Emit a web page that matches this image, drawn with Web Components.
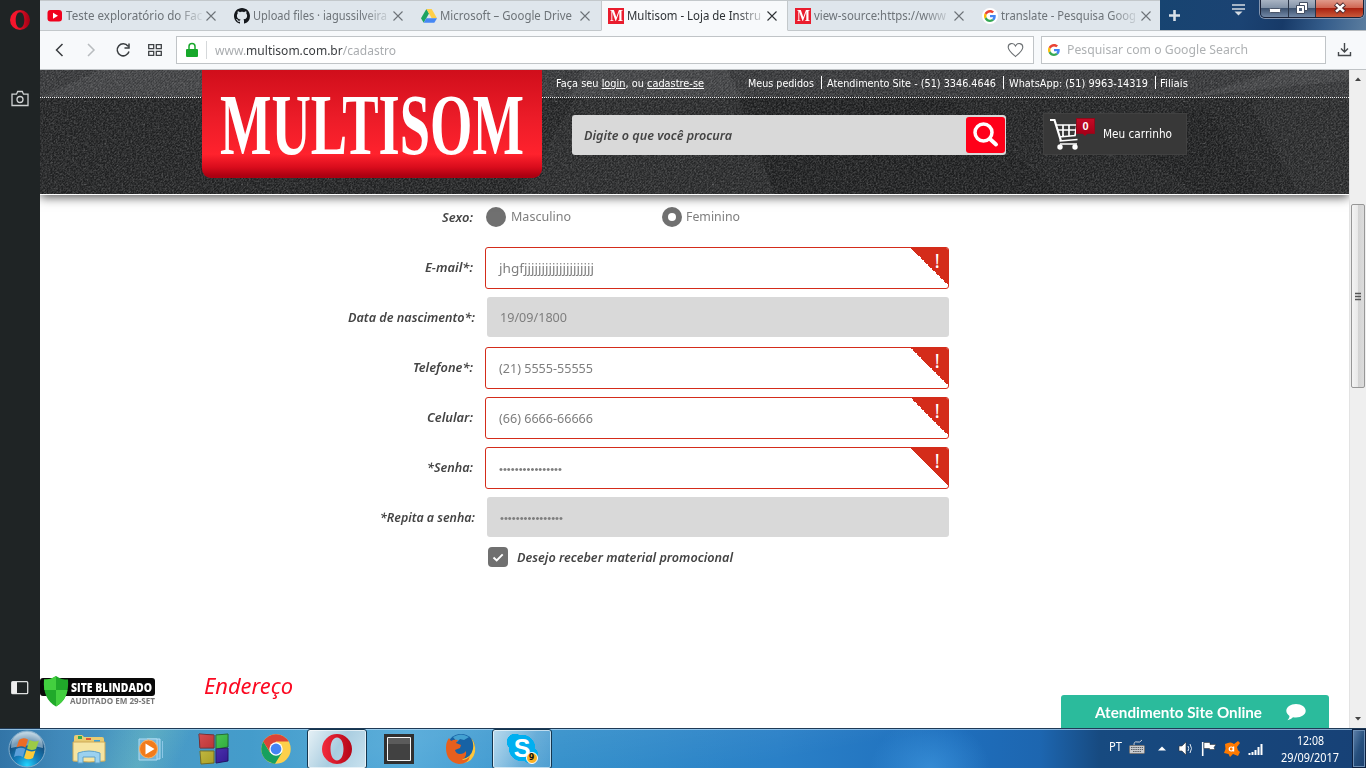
<!DOCTYPE html>
<html lang="pt-BR">
<head>
<meta charset="utf-8">
<title>Multisom - Loja de Instrumentos</title>
<style>
html,body{margin:0;height:100%;overflow:hidden;background:#fff}
body{font-family:"Noto Sans","Open Sans",sans-serif;font-size:13px}
</style>
</head>
<body>
<desk-screen></desk-screen>
<script>
const define = (name, css, html, after) => customElements.define(name, class extends HTMLElement {
  connectedCallback() {
    if (this.shadowRoot) return;
    const root = this.attachShadow({mode: 'open'});
    const body = typeof html === 'function' ? html(this) : html;
    root.innerHTML = `<style>*{box-sizing:border-box}:host{box-sizing:border-box}svg{display:block;flex:none}${css}</style>${body}`;
    if (after) after(this, root);
  }
});

/* One line of text, set to a given advance width. */
define('fit-text', `:host{display:inline-block;white-space:nowrap;flex:none}span{display:inline-block;transform-origin:0 50%}`,
  '<span><slot></slot></span>',
  (el, root) => {
    const s = root.querySelector('span'), w = +el.getAttribute('w');
    const n = s.getBoundingClientRect().width;
    el.style.width = w + 'px';
    if (n) s.style.transform = `scaleX(${w / n})`;
  });

/* ---------- icons ---------- */
const G = `<path fill="#ea4335" d="M24 9.5c3.5 0 6.700 1.200 9.200 3.600l6.900-6.900C35.900 2.400 30.500 0 24 0 14.600 0 6.500 5.400 2.600 13.200l8 6.200C12.400 13.700 17.700 9.500 24 9.500z"/><path fill="#4285f4" d="M47 24.600c0-1.600-.2-3.100-.4-4.600H24v9h12.900c-.6 3-2.300 5.500-4.800 7.200l7.700 6C44.400 38 47 31.800 47 24.600z"/><path fill="#fbbc05" d="M10.500 28.600c-.5-1.500-.8-3-.8-4.600s.3-3.100.8-4.600l-8-6.200C.9 16.500 0 20.100 0 24s.9 7.500 2.600 10.800z"/><path fill="#34a853" d="M24 48c6.500 0 11.900-2.100 15.900-5.800l-7.700-6c-2.200 1.500-4.900 2.300-8.200 2.300-6.300 0-11.600-4.200-13.500-9.900l-8 6.200C6.500 42.600 14.600 48 24 48z"/>`;
const ICONS = {
  youtube: `<svg width="16" height="16" viewBox="0 0 16 16"><rect x=".5" y="2" width="14.500" height="11.500" rx="3" fill="#f0001c"/><path d="M6 4.800v6l5-3z" fill="#fff"/></svg>`,
  github: `<svg width="16" height="16" viewBox="0 0 16 16"><path fill="#15181c" d="M8 0C3.580 0 0 3.580 0 8c0 3.540 2.290 6.530 5.470 7.590.4.070.55-.17.55-.38 0-.19-.01-.82-.01-1.490-2.010.37-2.530-.49-2.690-.94-.09-.23-.48-.94-.82-1.130-.28-.15-.68-.52-.01-.53.63-.01 1.080.58 1.230.82.72 1.210 1.870.87 2.330.66.070-.52.28-.87.51-1.070-1.780-.2-3.640-.89-3.640-3.950 0-.87.31-1.590.82-2.150-.08-.2-.36-1.020.08-2.120 0 0 .67-.21 2.200.82.640-.18 1.320-.27 2-.27s1.360.09 2 .27c1.530-1.040 2.200-.82 2.200-.82.44 1.100.16 1.920.08 2.120.51.56.82 1.270.82 2.150 0 3.070-1.870 3.750-3.650 3.950.29.25.54.73.54 1.480 0 1.070-.01 1.930-.01 2.200 0 .21.15.46.55.38A8 8 0 0016 8c0-4.420-3.580-8-8-8z"/></svg>`,
  drive: `<svg width="16" height="16" viewBox="0 0 16 16"><path fill="#1da362" d="M5.400 1L0 10.200 2.700 14.800 8 5.500z"/><path fill="#ffcf48" d="M5.400 1h5.300L16 10.200h-5.300z"/><path fill="#4587f4" d="M5.300 10.200H16l-2.700 4.600H2.700z"/></svg>`,
  google: `<svg width="16" height="16" viewBox="0 0 16 16"><circle cx="8" cy="8" r="8" fill="#fff"/><g transform="translate(2 2) scale(.25)">${G}</g></svg>`
};

define('tab-item', `
:host{display:flex;align-items:center;width:187px;height:31px;padding:0 5px 0 7px;color:#6d7378;background:#dfe6ec;border-top:1px solid #c3c8cb;border-bottom:1px solid #c3c8cb;position:relative}
:host([active]){background:#f7f9fb;border-bottom-color:#f7f9fb;border-left:1px solid #c3c8cb;border-right:1px solid #c3c8cb;color:#2d3135;padding-left:6px;padding-right:4px}
:host([line])::after{content:"";position:absolute;right:-1px;top:6px;width:1px;height:16px;background:#bfc4c8}
.t{width:136px;margin-left:3px;height:22px;line-height:22px;font-size:12.5px;overflow:hidden;-webkit-mask-image:linear-gradient(90deg,#000 110px,transparent 140px)}
:host([full]) .t{-webkit-mask-image:none}
.x{margin-left:2px}
.m{width:16px;height:16px;background:#e91c2d;color:#fff;font:bold 16px/16px "Liberation Serif",serif;display:flex;justify-content:center}
`, el => {
  const k = el.getAttribute('icon');
  const ic = ICONS[k] || `<div class="m"><fit-text w="13">M</fit-text></div>`;
  return `${ic}<div class="t"><fit-text w="${el.getAttribute('w')}"><slot></slot></fit-text></div>
  <svg class="x" width="14" height="14" viewBox="0 0 14 14"><path d="M2.500 2.500l9 9M11.500 2.500l-9 9" stroke="currentColor" stroke-width="1.100" fill="none"/></svg>`;
});

define('window-buttons', `:host{display:flex;width:104px;height:18px;border:1px solid #1a2238;border-top:0;border-radius:0 0 5px 5px;overflow:hidden;box-shadow:0 0 0 1px #8496b0}
div{display:flex;justify-content:center;align-items:center;border-right:1px solid #2a3548;background:linear-gradient(#a9b4c3 0,#8090a6 48%,#3e5370 50%,#7288a6)}
.a{width:28px}.b{width:27px}.c{flex:1;border:0;background:linear-gradient(#e09a8a 0,#cf6450 48%,#ab2210 50%,#c95a3a)}svg{margin-top:-2px}`,
`<div class="a"><svg width="14" height="14"><rect x="1.500" y="7.500" width="11" height="4" rx="1" fill="#fff" stroke="#4b566a"/></svg></div>
<div class="b"><svg width="14" height="14"><path d="M4.500 1.500h8v8h-8z" fill="#fff" stroke="#444f63"/><path d="M1.500 4.500h8v8h-8z" fill="#fff" stroke="#444f63"/><path d="M4 7h3v3H4z" fill="#52627a"/></svg></div>
<div class="c"><svg width="14" height="14"><path d="M2.500 3l9 8M11.500 3l-9 8" stroke="#4e2a2e" stroke-width="4.500"/><path d="M3 3.400l8 7.200M11 3.400l-8 7.200" stroke="#fff" stroke-width="2.600"/></svg></div>`);

define('tab-strip', `:host{display:flex;height:31px;background:#dfe6ec}
.aero{flex:1;display:flex;align-items:flex-start;background:linear-gradient(100deg,#174471 0,#1b4373 40%,#173a68 60%,#355d8b 80%,#5b7d9f);border-bottom:1px solid #b7bcc0;padding-right:2px}
.plus{margin:9px 0 0 8px}.menu{margin:3px 14px 0 auto}`,
`<tab-item icon="youtube" w="143" line>Teste exploratório do Face</tab-item><tab-item icon="github" w="134" line>Upload files · iagussilveira</tab-item><tab-item icon="drive" w="132" full>Microsoft – Google Drive</tab-item><tab-item icon="m" active w="134">Multisom - Loja de Instru</tab-item><tab-item icon="m" w="132" line>view-source:https://www</tab-item><tab-item icon="google" w="135" style="width:185px">translate - Pesquisa Goog</tab-item>
<div class="aero"><svg class="plus" width="13" height="13"><path d="M6.500 1v11M1 6.500h11" stroke="#d8e0e8" stroke-width="2.600"/></svg>
<svg class="menu" width="15" height="14"><path d="M1 2h13M1 6h13" stroke="#d5dbe2" stroke-width="1.600"/><path d="M3.500 8.500h8l-4 4z" fill="#d5dbe2"/></svg><window-buttons></window-buttons></div>`);

define('tool-bar', `:host{display:flex;height:39px;background:#f7f9fb;border-bottom:1px solid #bfc3c6;align-items:center;padding:0 13px 0 11px;line-height:20px}
.nav{display:flex;gap:16px;width:125px}
.box{height:28px;background:#fff;border:1px solid #c0c4c7;display:flex;align-items:center}
.addr{width:858px;padding:0 9px 0 9px;color:#a9acaf;font-size:13px}.addr i{width:1px;height:18px;background:#d5d8da;margin:0 8px 0 8px}
.addr b{font-weight:400;color:#3a3d40}.heart{margin-left:auto}
.srch{width:285px;margin-left:7px;padding-left:4px;color:#aeb1b3;font-size:12.500px}.srch fit-text{margin-left:5px}
.dl{margin-left:auto}`,
`<div class="nav"><svg width="16" height="16" fill="none" stroke="#383c3f" stroke-width="1.500"><path d="M11.500 2L5.500 8l6 6"/></svg><svg width="16" height="16" fill="none" stroke="#b8bcbf" stroke-width="1.500"><path d="M5 2l6 6-6 6"/></svg><svg width="16" height="16" fill="none" stroke="#383c3f" stroke-width="1.500"><path d="M13 4.200A6 6 0 1 0 14 9.500M14 1.500v4.500H9.500"/></svg><svg width="16" height="16" fill="none" stroke="#3f4346" stroke-width="1.300"><path d="M1.700 2.700h5v4h-5zM9.300 2.700h5v4h-5zM1.700 9.300h5v4h-5zM9.300 9.300h5v4h-5z"/></svg></div>
<div class="box addr"><svg width="12" height="16"><path d="M3 8V4.500a3 3 0 0 1 6 0V8" fill="none" stroke="#17a82b" stroke-width="1.500"/><rect x="0" y="7" width="12" height="8" rx="1" fill="#17a82b"/></svg><i></i><fit-text w="181">www.<b>multisom.com.br</b>/cadastro</fit-text>
<svg class="heart" width="17" height="16"><path d="M8.500 14.500C5 11.500 1.200 8.500 1.200 5.200 1.200 1.200 6.500 0 8.500 4c2-4 7.300-2.800 7.300 1.200 0 3.300-3.800 6.300-7.300 9.300z" fill="none" stroke="#6d7174" stroke-width="1.100"/></svg></div>
<div class="box srch">${ICONS.google}<fit-text w="181">Pesquisar com o Google Search</fit-text></div>
<svg class="dl" width="16" height="16" fill="none" stroke="#44484b" stroke-width="1.400"><path d="M7.500 1v9M4 6.500L7.500 10 11 6.500M1.500 10v3.500h12V10"/></svg>`);

define('side-bar', `:host{display:flex;flex-direction:column;align-items:center;width:40px;background:#1f2425;padding:10px 0 33px}
.cam{margin:60px 1px 0 0}.pan{margin:auto 1px 0 0}`,
`<svg width="20" height="20"><defs><linearGradient id="a"><stop offset=".3" stop-color="#f5152c"/><stop offset="1" stop-color="#a00014"/></linearGradient></defs><path fill="url(#a)" fill-rule="evenodd" d="M10 0a10 10 0 1 0 0 20 10 10 0 0 0 0-20zM10 2.200c2.700 0 4.300 3.400 4.300 7.800s-1.600 7.800-4.300 7.800S5.700 14.400 5.700 10 7.300 2.200 10 2.200z"/></svg>
<svg class="cam" width="18" height="17" fill="none" stroke="#d0d3d4" stroke-width="1.300"><path d="M1 4.200h4.500l1.200-2.700h4.600l1.200 2.700H17v11.300H1z"/><circle cx="9" cy="9.500" r="3"/></svg>
<svg class="pan" width="18" height="14"><rect x=".7" y=".7" width="16" height="12" rx="1" fill="none" stroke="#dfe1e1" stroke-width="1.300"/><path d="M1 1h5v11.500H1z" fill="#eee"/></svg>`);

define('site-logo', `:host{display:block;width:340px;height:108px;border-radius:0 0 9px 9px;background:linear-gradient(#d00e1b 0,#ec1c28 45%,#ff222d 78%,#d90c1c 90%,#ac0011 98%);color:#fff;padding:12px 0 0 18px;font:bold 86px/86px "Liberation Serif",serif}`,
`<fit-text w="304">MULTISOM</fit-text>`);

define('top-links', `:host{display:flex;height:27px;align-items:center;color:#fff;font:11px/14px "DejaVu Sans",sans-serif;padding:0 0 0 14px}
u{text-underline-offset:1px}.r{display:flex;margin-left:44px;align-items:center}i{width:1px;height:13px;background:#fff;margin:-2px 5px 0 7px}`,
`<fit-text w="148">Faça seu <u>login</u>, ou <u>cadastre-se</u></fit-text><div class="r"><fit-text w="66">Meus pedidos</fit-text><i></i><fit-text w="169">Atendimento Site - (51) 3346.4646</fit-text><i></i><fit-text w="139">WhatsApp: (51) 9963-14319</fit-text><i style="margin-right:4px"></i><fit-text w="28">Filiais</fit-text></div>`);

define('search-field', `:host{display:flex;width:434px;height:40px;background:#d9d9d9;border-radius:3px;align-items:center;padding:0 1px 0 12px;color:#444;justify-content:space-between;font:italic 600 13px/20px "Noto Sans",sans-serif}
fit-text{padding-bottom:1px}.b{width:39px;height:36px;background:#ff0019;border-radius:3px;display:flex;align-items:center;justify-content:center}`,
`<fit-text w="148">Digite o que você procura</fit-text><div class="b"><svg width="26" height="26" fill="none" stroke="#fff"><circle cx="10.500" cy="10.500" r="8.500" stroke-width="3.500"/><path d="M17 17l6 5.500" stroke-width="4" stroke-linecap="round"/></svg></div>`);

define('cart-button', `:host{display:flex;width:144px;height:42px;background:#383838;border:1px solid #414141;color:#fff;font:12px/16px "DejaVu Sans",sans-serif;align-items:center;position:relative;padding-left:5px}
fit-text.l{margin-left:23px}.n{position:absolute;left:32px;top:4px;width:19px;height:16px;background:linear-gradient(#c40a26,#a60018);font:bold 11px/14px "Liberation Sans",sans-serif;text-align:center;border:1px solid #8e0b1b}
.n::after{content:"";position:absolute;left:5px;top:14px;border:3px solid transparent;border-top-color:#a60018}`,
`<svg width="31" height="32" fill="none" stroke="#fff"><path d="M1 2h4.500l6.500 21" stroke-width="2.200"/><path d="M7 7h21l-2 10.500-16 1.500M8 12h19M14 7v11M20 7v11" stroke-width="1.700"/><path d="M10.500 23l18-1.500M11 26h17" stroke-width="1.700"/><circle cx="11" cy="29" r="2.700" fill="#fff" stroke="none"/><circle cx="26" cy="29" r="2.700" fill="#fff" stroke="none"/></svg><fit-text class="l" w="69">Meu carrinho</fit-text><div class="n">0</div>`);

define('site-header', `:host{display:block;height:125px;position:relative;background:#262627;border-bottom:1px solid #fff;box-shadow:0 2px 10px rgba(0,0,0,.7);flex:none}
.bg{position:absolute;inset:0}
.in{position:relative;display:flex;width:985px;margin-left:162px}
.r{width:645px}.row{display:flex;padding:16px 0 0 30px;justify-content:space-between;align-items:flex-start}search-field{margin-top:2px}`,
`<svg class="bg" width="1309" height="124"><defs><pattern id="h" width="3" height="3" patternUnits="userSpaceOnUse"><path d="M0 2h1v1H0zM1 1h1v1H1zM2 0h1v1H2z" fill="#000" fill-opacity=".16"/></pattern><pattern id="s" width="157" height="83" patternUnits="userSpaceOnUse" fill="#fff" fill-opacity=".16"><path d="M12 9h1v1h-1zM44 31h2v1h-2zM77 12h1v1h-1zM103 54h2v1h-2zM131 25h1v1h-1zM28 66h1v1h-1zM64 73h2v1h-2zM146 70h1v1h-1zM90 38h1v1h-1z"/></pattern>
<filter id="n" x="0" y="0" width="1" height="1"><feTurbulence type="fractalNoise" baseFrequency=".55" numOctaves="3" seed="4"/><feColorMatrix values="0 0 0 0 .6  0 0 0 0 .6  0 0 0 0 .6  .5 0 0 0 -.17"/></filter></defs>
<path fill="#232425" d="M0 0h1309v124H0z"/><path fill="#2a2b2c" d="M540 20L585 0 690 10 735 124H480zM1210 34l99-34v124h-50L1225 60z"/><path fill="#1f2021" d="M700 27l35 97h285L900 20zM1060 50l100 74h60L1170 40z"/><path fill="#37383a" d="M0 0h1309v27H0z"/><path fill="#434446" d="M0 27h162V0H60zM530 27L545 0h142l15 27zM1150 27l90-27h69v10z"/>
<path fill="url(#h)" d="M0 0h1309v124H0z"/><path fill="url(#s)" d="M0 0h1309v124H0z"/><rect width="1309" height="124" filter="url(#n)"/><path d="M0 27.500h1309" stroke="#eee" stroke-dasharray="1 1"/></svg>
<div class="in"><site-logo></site-logo><div class="r"><top-links></top-links><div class="row"><search-field></search-field><cart-button></cart-button></div></div></div>`);

define('form-row', `:host{display:flex;height:50px;padding-top:4px;font-size:13.300px}
.l{width:435px;text-align:right;color:#444;font-style:italic;font-weight:600;line-height:20px;padding:10px 0 0 0;margin-right:12px}
.f{width:462px;height:40px;background:#d9d9d9;border-radius:3px;color:#7e7e7e;padding:10px 0 0 12.500px;line-height:20px;position:relative;overflow:hidden}
:host([error]) .l{width:433px}
:host([error]) .f{width:464px;height:42px;background:#fff;border:1px solid #d42c1a}
.e{position:absolute;right:-1px;top:-1px;width:39px;height:39px;background:linear-gradient(45deg,transparent 50%,#d42c1a 50%);color:#fff;font:400 20px/28px "Noto Sans",sans-serif;text-align:right;padding-right:9px}`,
el => `<div class="l"><fit-text w="${el.getAttribute('lw')}">${el.getAttribute('label')}</fit-text></div><div class="f"><fit-text w="${el.getAttribute('vw')}"><slot></slot></fit-text>${el.hasAttribute('error') ? '<div class="e">!</div>' : ''}</div>`);

define('radio-option', `:host{display:flex;align-items:center;width:175.500px;color:#7e7e7e;font-size:13.300px}
i{width:20px;height:20px;border-radius:50%;background:#707070;margin-right:4.500px;display:flex;align-items:center;justify-content:center}
fit-text{line-height:18px;height:20px}
:host([checked]) i::before{content:"";width:8px;height:8px;border-radius:50%;background:#fff}`,
el => `<i></i><fit-text w="${el.getAttribute('w')}"><slot></slot></fit-text>`);

define('cadastro-form', `:host{display:block}
.sex{display:flex;height:48px;align-items:flex-start;padding-top:12px;color:#444}.sex .l{width:433px;margin-right:13px;text-align:right;font-weight:600;font-style:italic;line-height:20px}
.promo{display:flex;align-items:center;height:20px;margin:4px 0 0 448px;color:#444;font-style:italic;font-weight:600;line-height:20px;gap:9px;font-size:13.300px}
.ck{width:20px;height:20px;border-radius:4px;background:#707070}
.h{font:italic 400 22px/30px "Noto Sans",sans-serif;color:#fb0a22;margin:103px 0 0 164px}`,
`<div class="sex"><div class="l"><fit-text w="31">Sexo:</fit-text></div><radio-option w="60">Masculino</radio-option><radio-option checked w="54">Feminino</radio-option></div>
<form-row error label="E-mail*:" lw="48" vw="95">jhgfjjjjjjjjjjjjjjjjjjjj</form-row>
<form-row label="Data de nascimento*:" lw="127" vw="67">19/09/1800</form-row>
<form-row error label="Telefone*:" lw="60" vw="94">(21) 5555-55555</form-row>
<form-row error label="Celular:" lw="46" vw="94">(66) 6666-66666</form-row>
<form-row error label="*Senha:" lw="46" vw="63"><span style="font:11px 'Liberation Sans'">••••••••••••••••</span></form-row>
<form-row label="*Repita a senha:" lw="95" vw="63"><span style="font:11px 'Liberation Sans'">••••••••••••••••</span></form-row>
<div class="promo"><div class="ck"><svg width="20" height="20"><path d="M5.500 10.500l3.200 3 6-6.200" fill="none" stroke="#fff" stroke-width="1.900"/></svg></div><fit-text w="216">Desejo receber material promocional</fit-text></div>
<div class="h"><fit-text w="89">Endereço</fit-text></div>`);

define('blindado-seal', `:host{display:block;position:absolute;left:0;top:606px;width:116px;height:31px}
.k{height:18px;width:115px;margin-top:2px;background:#090909;border-radius:3px;color:#fff;font:800 12px/19px "Open Sans",sans-serif;padding-left:31px}
.a{font:700 8px/9px "Open Sans",sans-serif;color:#777;padding-left:30px}svg{position:absolute;left:3px;top:0}`,
`<div class="k"><fit-text w="81">SITE BLINDADO</fit-text></div><div class="a"><fit-text w="85">AUDITADO EM 29-SET</fit-text></div><svg width="26" height="31"><path fill="#20a92a" d="M13 0c4 3 8 3.500 12 3.500 1 13-3 22-12 27C4 25.500 0 16.500 1 3.500 5 3.500 9 3 13 0z"/><path fill="#43cf3f" d="M13 0v14H1.300Q.7 9 1 3.500 8 3.500 13 0zM13 14h11.500C23 22 19 27 13 30.500z"/></svg>`);

define('chat-tab', `:host{display:flex;position:absolute;left:1021px;bottom:0;width:268px;height:33px;background:#2bbb9c;border-radius:3px 3px 0 0;color:#fff;align-items:center;padding:1px 0 0 34px;font:bold 15px/20px Lato,sans-serif}svg{margin-left:24px}`,
`<fit-text w="167">Atendimento Site Online</fit-text><svg width="20" height="18"><path fill="#fff" d="M10 1c5.500 0 9.700 3 9.700 6.800S15.500 14.500 10 14.500q-1.500 0-3-.3Q4.500 17 1.500 17.200q2-1.500 2-4.200C1.500 11.500.3 9.800.3 7.800.3 4 4.500 1 10 1z"/></svg>`);

define('scroll-bar', `:host{display:flex;flex-direction:column;align-items:center;width:17px;height:658px;background:#efefef;border-left:1px solid #e3e3e3;padding:7px 0 7px}
.th{width:14px;height:184px;margin-top:123px;border:1px solid #979797;border-radius:2px;background:linear-gradient(90deg,#f4f4f4 0,#e9e9e9 48%,#d3d3d3 50%,#dcdcdc);display:flex;align-items:center;justify-content:center}.d{margin-top:auto}`,
`<svg width="8" height="4"><path d="M1 4l3-3.500L7 4z" fill="#444"/></svg><div class="th"><svg width="8" height="9"><path d="M1 1.500h6M1 4.500h6M1 7.500h6" stroke="#555" stroke-width="1.500"/></svg></div><svg class="d" width="8" height="4"><path d="M1 0h6L4 3.500z" fill="#444"/></svg>`);

define('web-page', `:host{display:flex;height:658px;background:#fff}.v{width:1309px;position:relative;overflow:hidden;display:flex;flex-direction:column}`,
`<div class="v"><site-header></site-header><cadastro-form></cadastro-form><blindado-seal></blindado-seal><chat-tab></chat-tab></div><scroll-bar></scroll-bar>`);

define('task-button', `:host{display:flex;width:62px;height:40px;align-items:center;justify-content:center;flex:none}
:host([open]){width:60px;border:1px solid #14364f;border-radius:3px;box-shadow:inset 0 0 0 1px rgba(255,255,255,.6);background:linear-gradient(115deg,rgba(255,255,255,.6),rgba(255,255,255,.2) 60%,rgba(255,255,255,.1))}
:host([lit]){background:linear-gradient(120deg,#e6f1f6,#a9cde0 50%,#c9e2ef)}`, `<slot></slot>`);

define('system-tray', `:host{display:flex;margin-left:auto;height:40px;align-items:center;color:#fff;font-size:12px}
.kb{margin-left:7px}.up{margin-left:13px}.sp{margin-left:12px}.fl{margin-left:7px}.av{margin-left:7px}.sg{margin-left:8px}
.ck{display:flex;flex-direction:column;align-items:center;line-height:17px;width:60px;margin-left:16px}
.sh{width:14px;height:39px;margin-left:12px;border:1px solid #0c2040;box-shadow:inset 0 0 0 1px #6c8eb4;background:linear-gradient(110deg,#6082ab,#27507e 50%,#1a3d6c)}
.pt{margin-top:-5px}.kb{margin-top:-4px}`,
`<fit-text class="pt" w="13">PT</fit-text><svg class="kb" width="16" height="16"><path d="M5 6Q5 2 8 3t5-2" fill="none" stroke="#c8ced6"/><rect x=".5" y="6.500" width="15" height="8" rx="1" fill="#c9ccd0" stroke="#777"/><path d="M2 8.500h12M2 10.500h12M4 12.500h8" stroke="#5d6268" stroke-dasharray="1.500 .7"/></svg>
<svg class="up" width="8" height="5"><path d="M0 4.500l4-4 4 4z" fill="#fff"/></svg>
<svg class="sp" width="16" height="15"><path d="M1 5h3l4-4v13l-4-4H1z" fill="#fff" stroke="#333" stroke-width=".6"/><path d="M10 5q1.500 2.500 0 5M12 3q3 4.500 0 9" fill="none" stroke="#dce5ee"/></svg>
<svg class="fl" width="16" height="15"><path d="M1.700 1v14" stroke="#fff" stroke-width="1.600"/><path d="M3 1.500h6v2h6l-2 3 1 2H8.500V7.500H3z" fill="#fff" stroke="#222" stroke-width=".5"/></svg>
<svg class="av" width="16" height="16"><path d="M1 3Q7 0 10 3l4-3 2 2-3 4q0 3 3 5l-2 4-5-2-3 3-1.500-3L0 12l1.500-4z" fill="#ff7a00"/><circle cx="7.200" cy="8" r="2" fill="none" stroke="#fff" stroke-width="1.200"/><path d="M9.600 5.500v5" stroke="#fff" stroke-width="1.200"/></svg>
<svg class="sg" width="16" height="14"><path d="M1.500 13v-2M4.500 13v-3M7.500 13V8M10.500 13V5M13.500 13V2" stroke="#fff" stroke-width="2"/></svg>
<div class="ck"><fit-text w="27">12:08</fit-text><fit-text w="58">29/09/2017</fit-text></div><div class="sh"></div>`);

define('task-bar', `:host{display:flex;height:40px;align-items:center;overflow:hidden;border-top:1px solid #1f3a56;box-shadow:inset 0 1px 0 rgba(190,225,250,.65);background:linear-gradient(115deg,transparent 90px,rgba(140,215,190,.3) 140px,transparent 175px),linear-gradient(170deg,rgba(255,255,255,.1) 30%,transparent 60%),radial-gradient(60px 50px at 930px 40px,rgba(70,160,230,.55),transparent),linear-gradient(90deg,#1b659d 0,#2b7cb2 60px,#358fbf 140px,#2f91c5 250px,#4aa5d7 410px,#2f8dc9 560px,#2a80c7 780px,#1f6fbd 950px,#1d66b0 1040px,#174a80 1100px,#174176 1366px)}
.n{font:bold 8px/10px "DejaVu Sans",sans-serif;position:absolute;right:0;bottom:0;width:12px;height:12px;border-radius:50%;background:#fdb121;border:1px solid #fff;color:#111;text-align:center}
.sk{position:relative;width:31px;height:31px;display:flex;justify-content:center;font:bold 25px/30px "Liberation Sans",sans-serif;color:#fff;background:radial-gradient(circle at 8px 9px,#00aff0 8px,transparent 8.500px),radial-gradient(circle at 23px 22px,#00aff0 8px,transparent 8.500px),radial-gradient(circle at 15px 15px,#00aff0 13px,transparent 13.500px)}
svg{margin:auto}.orb{margin:0 13px 0 8px}.s{position:relative;left:-1px}`,
`<svg class="orb" width="38" height="38"><defs><radialGradient id="o" cx=".5" cy=".95" r=".9"><stop offset="0" stop-color="#21d6ff"/><stop offset=".35" stop-color="#1580bd"/><stop offset=".75" stop-color="#15507f"/><stop offset="1" stop-color="#a9c6da"/></radialGradient></defs><circle cx="19" cy="19" r="18" fill="url(#o)" stroke="#85aecb"/><path d="M3 18Q3 3 19 2q16 1 16 16Q20 13 3 18z" fill="#d7e5ee" fill-opacity=".5"/><path d="M11 10q4-3 9-.500l-2.500 8Q13 15 8.500 17.500z" fill="#ec6c25"/><path d="M21.500 10q5 2.500 9.500.500l-3 8.500q-5 2-9-.500z" fill="#9ccb46"/><path d="M8 19q5-2.500 9.300 0l-2.500 8q-4.500-2.500-8.800 0z" fill="#5b9fd9"/><path d="M18.500 20q4.500 2.500 9 .500L25 28q-4.500 2.500-9 0z" fill="#fccb3a"/></svg>
<task-button><svg class="s" width="34" height="32"><path d="M2 4q0-2 2-2h6l2 2h18q2 0 2 2v22H2z" fill="#e8cb72"/><path d="M6 3h4v3H6z" fill="#2fab50"/><path d="M14 5h5v2h-5z" fill="#df5635"/><path d="M22 7h6v2h-6z" fill="#3ba1da"/><path d="M1 9h32v19q-16 2-32 0z" fill="#f6e5a2" stroke="#cda956"/><path d="M6 20q11-4 22 0v10h-5v-6H11v6H6z" fill="#9bd1ef" stroke="#5fa1c8"/></svg></task-button>
<task-button><svg class="s" width="28" height="26"><path d="M10 3h13v20H10z" fill="#79b9df" stroke="#afdcf4"/><path d="M25.500 5v17" stroke="#8cc6e6"/><path d="M2 3h18v21H2z" fill="#73b4da" stroke="#b1dcf1"/><circle cx="11.500" cy="13" r="9" fill="#f27b1b" stroke="#f9b265"/><path d="M8.500 7.500v11l9-5.500z" fill="#fff"/></svg></task-button>
<task-button><svg class="s" width="32" height="32"><defs><linearGradient id="q" x2="1" y2="1"><stop offset="0" stop-color="#fff" stop-opacity=".2"/><stop offset="1" stop-color="#000" stop-opacity=".2"/></linearGradient></defs><path d="M2 1l15 1v13H3z" fill="#c92224" stroke="#711c20"/><path d="M19 2l12-1v13l-12 2z" fill="#2ec83c" stroke="#176b24"/><path d="M3 18h14v12L4 31z" fill="#c4b822" stroke="#746b18"/><path d="M19 16l12-1v13l-12 2z" fill="#3f1fb8" stroke="#26146d"/><path d="M2 1l15 1v13H3zM19 2l12-1v13l-12 2zM3 18h14v12L4 31zM19 16l12-1v13l-12 2z" fill="url(#q)"/></svg></task-button>
<task-button><svg width="30" height="30"><circle cx="15" cy="15" r="14.700" fill="#fdd04b"/><path d="M2.300 7.600A14.700 14.700 0 0 0 14 29.700L21 18.500l-12 0z" fill="#17a05e"/><path d="M2.300 7.600A14.700 14.700 0 0 1 27.700 7.600H15L9 18z" fill="#dc4437"/><circle cx="15" cy="15" r="6.700" fill="#fff"/><circle cx="15" cy="15" r="5.400" fill="#4484f3"/></svg></task-button>
<task-button open lit><svg width="32" height="32"><defs><linearGradient id="p"><stop offset="0" stop-color="#f32b3c"/><stop offset="1" stop-color="#b50617"/></linearGradient></defs><path fill="url(#p)" fill-rule="evenodd" d="M16 1a15 15 0 1 0 0 30 15 15 0 0 0 0-30zM16 4.500c4 0 6.500 5 6.500 11.500S20 27.500 16 27.500 9.500 22.500 9.500 16 12 4.500 16 4.500z"/></svg></task-button>
<task-button><svg width="30" height="30" style="margin-left:17px"><path d="M0 0h30v30H0z" fill="#303030"/><path d="M3.500 3.500h23v23h-23z" fill="#414141" stroke="#f4f4f4"/><path d="M4 4h22v6H4z" fill="#5b5b5b"/></svg></task-button>
<task-button><svg width="32" height="32"><circle cx="17" cy="15" r="14" fill="#1762a5"/><path d="M9 4q8-5 16 0l-5 3-4-1-3 3z" fill="#43a1d1"/><path d="M27 5q3 5 2 11-2 9-11 10-5 0-8-3l-4 3q5 5 13 4 10-1 12-11 1-9-4-14z" fill="#fdc63a"/><path d="M2 15Q2 9 5 5l2 3q3-2 7-1l-2 3 5 2-1 3-5 2q1 4 5 4 4 0 6-3 1 6-4 9 5 0 8-4-2 8-11 8Q2 29 2 15z" fill="#e75f1d"/></svg></task-button>
<task-button open style="margin-left:1px"><div class="sk">S<div class="n">9</div></div></task-button><system-tray></system-tray>`);

define('desk-screen', `:host{display:grid;width:1366px;height:768px;grid-template:728px 40px / 40px 1326px}task-bar{grid-column:1/3}.b{display:flex;flex-direction:column}`,
`<side-bar></side-bar><div class="b"><tab-strip></tab-strip><tool-bar></tool-bar><web-page></web-page></div><task-bar></task-bar>`);
</script>
</body>
</html>
